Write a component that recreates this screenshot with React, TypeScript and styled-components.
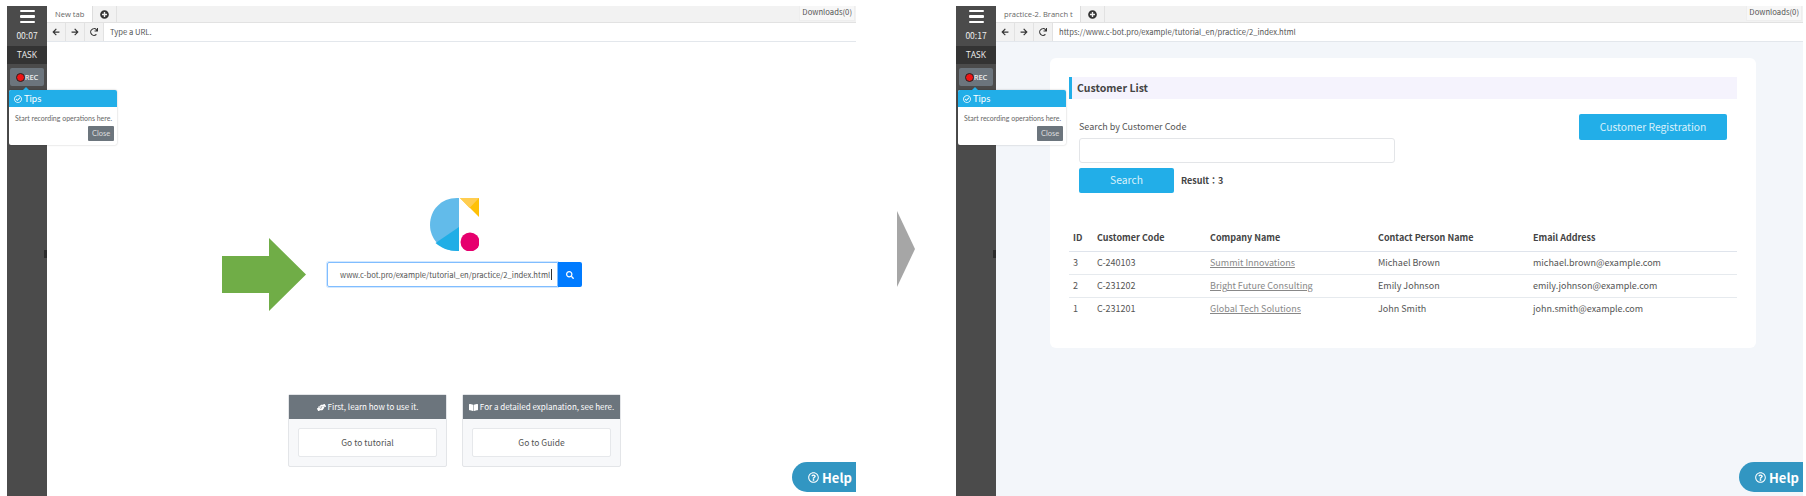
import React from "react";
import styled, { createGlobalStyle } from "styled-components";
import {
  FaArrowLeft,
  FaArrowRight,
  FaBookOpen,
  FaHandsHelping,
  FaPlusCircle,
  FaRedo,
  FaRegCheckCircle,
  FaRegQuestionCircle,
  FaSearch,
} from "react-icons/fa";

const Global = createGlobalStyle`
  html, body { margin: 0; padding: 0; background: #fff; height: 496px; overflow: hidden; }
  * { box-sizing: border-box; }
  body { font-family: "Noto Sans CJK JP", "Noto Sans", sans-serif; color: #4a4a4a; }
`;

const Page = styled.div`
  display: flex;
  width: 1806px;
  height: 496px;
  padding: 6px 3px 0 7px;
  overflow: hidden;
`;

const Shot = styled.section<{ $width: number }>`
  position: relative;
  display: flex;
  flex: none;
  width: ${(p) => p.$width}px;
  height: 490px;
  overflow: hidden;
`;

const Between = styled.div`
  flex: none;
  width: 100px;
  padding: 205px 0 0 41px;
`;

const Sidebar = styled.aside`
  position: relative;
  flex: none;
  width: 40px;
  background: #4b4b4b;
  display: flex;
  flex-direction: column;
  align-items: center;
`;

const Burger = styled.div`
  margin-top: 4px;
  width: 15px;
  height: 13px;
  display: flex;
  flex-direction: column;
  justify-content: space-between;
  span {
    display: block;
    height: 2.4px;
    background: #fff;
    border-radius: 1px;
  }
`;

const Clock = styled.div`
  margin-top: 4px;
  height: 19px;
  font: 8.5px/17px "Noto Sans CJK JP", sans-serif;
  color: #eee;
`;

const Task = styled.div`
  width: 100%;
  height: 18px;
  background: #333;
  color: #eee;
  font: 8.5px/18px "Open Sans", sans-serif;
  text-align: center;
`;

const RecButton = styled.div`
  margin-top: 4px;
  width: 34px;
  height: 18px;
  border-radius: 2px;
  background: #6c757d;
  color: #eee;
  font: 600 7.5px/18px "Open Sans", sans-serif;
  display: flex;
  align-items: center;
  justify-content: center;
`;

const RecDot = styled.i`
  width: 9px;
  height: 9px;
  border-radius: 50%;
  background: #f01414;
  border: 1px solid #222;
`;

const Grip = styled.div`
  position: absolute;
  right: 0;
  top: 244px;
  width: 3px;
  height: 8px;
  background: #2c2c2c;
`;

const TipBox = styled.div`
  position: absolute;
  left: 2px;
  top: 84px;
  width: 108px;
  height: 55px;
  background: #fff;
  border-radius: 2px;
  box-shadow: 0 0 2px rgba(0, 0, 0, 0.25);
  z-index: 2;
  &::before {
    content: "";
    position: absolute;
    left: 14px;
    top: -3px;
    border: 3px solid transparent;
    border-top: 0;
    border-bottom-color: #22aee8;
  }
`;

const TipHead = styled.div`
  height: 17px;
  background: #22aee8;
  color: #fff;
  font: 9.5px/17px Lato, sans-serif;
  padding-left: 5px;
  display: flex;
  align-items: center;
  gap: 2px;
  border-radius: 2px 2px 0 0;
  svg { width: 8px; height: 8px; }
`;

const TipBody = styled.div`
  padding: 5px 0 0 6px;
  font: 7px/12px Lato, sans-serif;
  color: #666;
  white-space: nowrap;
`;

const TipClose = styled.div`
  position: absolute;
  right: 3px;
  bottom: 4px;
  width: 26px;
  height: 15px;
  border-radius: 1px;
  background: #6c757d;
  color: #ddd;
  font: 7.5px/15px Lato, sans-serif;
  text-align: center;
`;

const Browser = styled.div`
  flex: 1;
  min-width: 0;
  display: flex;
  flex-direction: column;
  position: relative;
`;

const TabStrip = styled.div`
  position: relative;
  flex: none;
  height: 17px;
  background: #f2f2f2;
  border-bottom: 1px solid #e2e2e2;
  display: flex;
`;

const Tab = styled.div<{ $wide?: boolean }>`
  width: ${(p) => (p.$wide ? 85 : 46)}px;
  background: #fff;
  color: #666;
  font: 7.6px/17px "Open Sans", sans-serif;
  padding-left: 8px;
  white-space: nowrap;
  overflow: hidden;
  border-right: 1px solid #ddd;
`;

const AddTab = styled.div`
  width: 24px;
  display: flex;
  align-items: center;
  justify-content: center;
  border-right: 1px solid #e2e2e2;
  color: #333;
  svg { width: 9px; height: 9px; }
`;

const Downloads = styled.div`
  position: absolute;
  right: 1px;
  top: 0;
  height: 15px;
  padding: 0 2px;
  background: #f7f7f7;
  border: 1px solid #eee;
  border-top: 0;
  color: #555;
  font: 7.7px/12px "Noto Sans CJK JP", sans-serif;
`;

const ToolBar = styled.div`
  flex: none;
  height: 19px;
  display: flex;
  background: #fff;
  border-bottom: 1px solid #e3e7ec;
`;

const NavButton = styled.div`
  width: 19px;
  background: #f2f2f2;
  border-right: 1px solid #e2e2e2;
  display: flex;
  align-items: center;
  justify-content: center;
  color: #333;
  svg { width: 8px; height: 8px; }
`;

const Address = styled.div`
  flex: 1;
  padding-left: 6px;
  font: 7.65px/18px "Noto Sans CJK JP", sans-serif;
  color: #555;
  white-space: nowrap;
`;

const Start = styled.main`
  flex: 1;
  display: flex;
  flex-direction: column;
  align-items: center;
  padding: 156px 0 0 6px;
  background: #fff;
`;

const LogoMark = styled.svg`
  display: block;
  width: 49px;
  height: 53px;
`;

const SearchGroup = styled.div`
  margin-top: 11px;
  display: flex;
  width: 255px;
  height: 25px;
`;

const UrlField = styled.div`
  flex: 1;
  border: 1px solid #80bdff;
  box-shadow: 0 0 0 1px rgba(128, 189, 255, 0.35);
  border-radius: 2px 0 0 2px;
  padding-left: 12px;
  font: 7.65px/23px "Noto Sans CJK JP", sans-serif;
  color: #555;
  white-space: nowrap;
`;

const Caret = styled.span`
  border-left: 1px solid #333;
  margin-left: 1px;
`;

const UrlGo = styled.div`
  flex: none;
  width: 24px;
  background: #007bff;
  border-radius: 0 2px 2px 0;
  color: #fff;
  display: flex;
  align-items: center;
  justify-content: center;
  svg { width: 8px; height: 8px; }
`;

const Cards = styled.div`
  margin-top: 107px;
  display: flex;
  gap: 15px;
`;

const GuideCard = styled.div`
  width: 159px;
  height: 73px;
  background: #f7f8fa;
  border: 1px solid #e3e5e8;
  border-radius: 2px;
  display: flex;
  flex-direction: column;
`;

const GuideHead = styled.div`
  height: 24px;
  background: #6c757d;
  color: #fff;
  font-size: 8px;
  line-height: 24px;
  display: flex;
  align-items: center;
  justify-content: center;
  gap: 2px;
  white-space: nowrap;
  svg { width: 9px; height: 9px; }
`;

const GuideLink = styled.div`
  margin: 9px 9px 0;
  height: 29px;
  background: #fff;
  border: 1px solid #e6e8eb;
  border-radius: 2px;
  font-size: 8.5px;
  line-height: 27px;
  text-align: center;
  color: #555;
`;

const HelpButton = styled.div`
  position: absolute;
  right: 0;
  top: 456px;
  width: 64px;
  height: 30px;
  border-radius: 15px 0 0 15px;
  background: #3296c2;
  color: #fff;
  font-size: 13px;
  font-weight: 700;
  display: flex;
  align-items: center;
  padding-left: 16px;
  gap: 3px;
  svg { width: 11px; height: 11px; }
`;

const Site = styled.main`
  flex: 1;
  background: #f3f6fa;
  padding: 16px 47px 0 54px;
`;

const ListCard = styled.div`
  height: 290px;
  background: #fff;
  border-radius: 6px;
  padding: 19px 19px 0;
`;

const Title = styled.h1`
  margin: 0;
  height: 22px;
  background: #f5f3fd;
  border-left: 3px solid #22aee8;
  padding-left: 5px;
  font-size: 10.5px;
  font-weight: 700;
  line-height: 22px;
  color: #444;
`;

const FormRow = styled.div`
  display: flex;
  justify-content: space-between;
  align-items: flex-start;
  padding: 15px 10px 0;
`;

const FormLeft = styled.div`
  display: flex;
  flex-direction: column;
  padding-top: 5px;
`;

const FieldLabel = styled.label`
  font-size: 9px;
  line-height: 15px;
  color: #555;
`;

const TextField = styled.div`
  margin-top: 4px;
  width: 316px;
  height: 25px;
  background: #fff;
  border: 1px solid #e3e5e8;
  border-radius: 3px;
`;

const SearchLine = styled.div`
  margin-top: 5px;
  display: flex;
  align-items: center;
  gap: 7px;
`;

const PrimaryButton = styled.div<{ $w: number; $h: number }>`
  width: ${(p) => p.$w}px;
  height: ${(p) => p.$h}px;
  background: #22aee8;
  border-radius: 2px;
  color: #d9f1fb;
  font-size: 10.3px;
  line-height: ${(p) => p.$h - 1}px;
  text-align: center;
`;

const ResultText = styled.div`
  font-size: 9px;
  font-weight: 700;
  color: #444;
`;

const Table = styled.table`
  width: 100%;
  margin-top: 32px;
  border-collapse: collapse;
  table-layout: fixed;
  font-size: 9px;
  th, td {
    padding: 0 0 0 4px;
    text-align: left;
    white-space: nowrap;
  }
  th {
    height: 26px;
    font-weight: 700;
    color: #444;
    border-bottom: 1px solid #dfe4ec;
  }
  td {
    height: 23px;
    color: #555;
    border-bottom: 1px solid #e6eaee;
  }
  tr:last-child td { border-bottom: 0; }
`;

const CompanyLink = styled.a`
  color: #888;
  text-decoration: underline;
`;

const BigArrow = styled.svg`
  position: absolute;
  left: 215px;
  top: 232px;
  width: 84px;
  height: 73px;
  z-index: 1;
`;

const Chevron = styled.svg`
  display: block;
  width: 18px;
  height: 76px;
`;

const rows = [
  ["3", "C-240103", "Summit Innovations", "Michael Brown", "michael.brown@example.com"],
  ["2", "C-231202", "Bright Future Consulting", "Emily Johnson", "emily.johnson@example.com"],
  ["1", "C-231201", "Global Tech Solutions", "John Smith", "john.smith@example.com"],
];

function Rail({ time }: { time: string }) {
  return (
    <Sidebar>
      <Burger>
        <span />
        <span />
        <span />
      </Burger>
      <Clock>{time}</Clock>
      <Task>TASK</Task>
      <RecButton>
        <RecDot />
        REC
      </RecButton>
      <Grip />
    </Sidebar>
  );
}

function Tips() {
  return (
    <TipBox>
      <TipHead>
        <FaRegCheckCircle />
        Tips
      </TipHead>
      <TipBody>Start recording operations here.</TipBody>
      <TipClose>Close</TipClose>
    </TipBox>
  );
}

function Chrome({ tab, wide, url }: { tab: string; wide?: boolean; url: string }) {
  return (
    <>
      <TabStrip>
        <Tab $wide={wide}>{tab}</Tab>
        <AddTab>
          <FaPlusCircle />
        </AddTab>
        <Downloads>Downloads(0)</Downloads>
      </TabStrip>
      <ToolBar>
        <NavButton>
          <FaArrowLeft />
        </NavButton>
        <NavButton>
          <FaArrowRight />
        </NavButton>
        <NavButton>
          <FaRedo />
        </NavButton>
        <Address>{url}</Address>
      </ToolBar>
    </>
  );
}

export default function App() {
  return (
    <>
      <Global />
      <Page>
        <Shot $width={849}>
          <Rail time="00:07" />
          <Browser>
            <Chrome tab="New tab" url="Type a URL." />
            <Start>
              <LogoMark viewBox="0 0 49 53">
                <path d="M29 0H27C11 0 0 12 0 27C0 41 11 53 27 53H29Z" fill="#62bbea" />
                <path d="M29 29L5.5 45C11 50 19 53 27 53H29Z" fill="#20aee6" />
                <path d="M30 0H49V19Z" fill="#ffc107" />
                <path d="M30 0H49L39.5 10Z" fill="#ffcd50" />
                <circle cx="40" cy="44" r="9.5" fill="#e6006e" />
              </LogoMark>
              <SearchGroup>
                <UrlField>
                  www.c-bot.pro/example/tutorial_en/practice/2_index.html
                  <Caret />
                </UrlField>
                <UrlGo>
                  <FaSearch />
                </UrlGo>
              </SearchGroup>
              <Cards>
                <GuideCard>
                  <GuideHead>
                    <FaHandsHelping />
                    First, learn how to use it.
                  </GuideHead>
                  <GuideLink>Go to tutorial</GuideLink>
                </GuideCard>
                <GuideCard>
                  <GuideHead>
                    <FaBookOpen />
                    For a detailed explanation, see here.
                  </GuideHead>
                  <GuideLink>Go to Guide</GuideLink>
                </GuideCard>
              </Cards>
            </Start>
            <HelpButton>
              <FaRegQuestionCircle />
              Help
            </HelpButton>
          </Browser>
          <Tips />
          <BigArrow viewBox="0 0 84 73">
            <path d="M0 18H47V0L84 36.5L47 73V55H0Z" fill="#70ad47" />
          </BigArrow>
        </Shot>
        <Between>
          <Chevron viewBox="0 0 18 76">
            <path d="M0 0L18 38L0 76Z" fill="#a6a6a6" />
          </Chevron>
        </Between>
        <Shot $width={847}>
          <Rail time="00:17" />
          <Browser>
            <Chrome
              wide
              tab="practice-2. Branch t"
              url="https://www.c-bot.pro/example/tutorial_en/practice/2_index.html"
            />
            <Site>
              <ListCard>
                <Title>Customer List</Title>
                <FormRow>
                  <FormLeft>
                    <FieldLabel>Search by Customer Code</FieldLabel>
                    <TextField />
                    <SearchLine>
                      <PrimaryButton $w={95} $h={25}>Search</PrimaryButton>
                      <ResultText>Result：3</ResultText>
                    </SearchLine>
                  </FormLeft>
                  <PrimaryButton $w={148} $h={26}>Customer Registration</PrimaryButton>
                </FormRow>
                <Table>
                  <colgroup>
                    <col style={{ width: 24 }} />
                    <col style={{ width: 113 }} />
                    <col style={{ width: 168 }} />
                    <col style={{ width: 155 }} />
                    <col />
                  </colgroup>
                  <thead>
                    <tr>
                      <th>ID</th>
                      <th>Customer Code</th>
                      <th>Company Name</th>
                      <th>Contact Person Name</th>
                      <th>Email Address</th>
                    </tr>
                  </thead>
                  <tbody>
                    {rows.map((r) => (
                      <tr key={r[0]}>
                        <td>{r[0]}</td>
                        <td>{r[1]}</td>
                        <td>
                          <CompanyLink>{r[2]}</CompanyLink>
                        </td>
                        <td>{r[3]}</td>
                        <td>{r[4]}</td>
                      </tr>
                    ))}
                  </tbody>
                </Table>
              </ListCard>
            </Site>
            <HelpButton>
              <FaRegQuestionCircle />
              Help
            </HelpButton>
          </Browser>
          <Tips />
        </Shot>
      </Page>
    </>
  );
}
